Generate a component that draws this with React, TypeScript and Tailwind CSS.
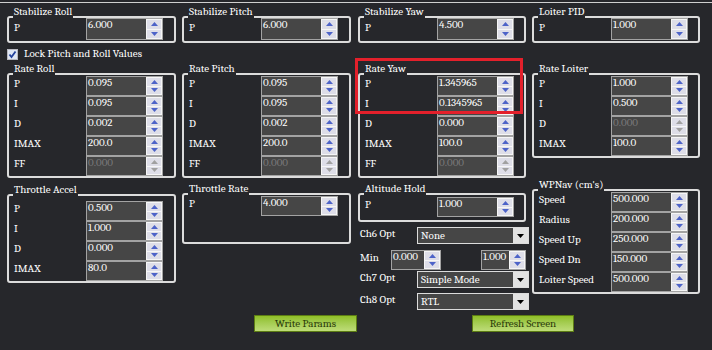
import React from "react";

type Row = { label: string; value: string; disabled?: boolean };

const BG = "bg-[#26272b]";

function Arrow({ up, disabled }: { up?: boolean; disabled?: boolean }) {
  return (
    <svg width="7" height="4" viewBox="0 0 7 4">
      <path d={up ? "M0 4 L3.5 0 L7 4 Z" : "M0 0 L7 0 L3.5 4 Z"} fill={disabled ? "#a0a0a0" : "#4d63c8"} />
    </svg>
  );
}

function Spinner({ disabled }: { disabled?: boolean }) {
  return (
    <div className="absolute right-0 top-0 bottom-0 flex w-[16px] flex-col gap-px border border-[#f6f6f6] bg-[#f6f6f6]">
      <div className="flex flex-1 items-center justify-center bg-[#dedee8]">
        <Arrow up disabled={disabled} />
      </div>
      <div className="flex flex-1 items-center justify-center bg-[#dedee8]">
        <Arrow disabled={disabled} />
      </div>
    </div>
  );
}

function NumBox({ value, disabled, className = "h-[20px] w-[77px]" }: { value: string; disabled?: boolean; className?: string }) {
  return (
    <div className={`relative shrink-0 border border-[#a3a3a3] bg-[#464646] pl-px leading-[12px] ${className}`}>
      <span className={disabled ? "text-[#7a7a7a]" : "text-white"}>{value}</span>
      <Spinner disabled={disabled} />
    </div>
  );
}

function Group({ title, className = "", children }: { title: string; className?: string; children?: React.ReactNode }) {
  return (
    <div className={`relative rounded-[3px] border-2 border-[#dcdcdc] ${className}`}>
      <span className={`absolute -top-[12px] left-[4px] ${BG} px-px leading-[12px] whitespace-nowrap`}>{title}</span>
      {children}
    </div>
  );
}

function ParamRow({ row }: { row: Row }) {
  return (
    <div className="flex h-[20px]">
      <div className="w-[77px] shrink-0 pl-[5px] pt-[2px] leading-[12px]">{row.label}</div>
      <NumBox value={row.value} disabled={row.disabled} />
    </div>
  );
}

function Rows({ rows }: { rows: Row[] }) {
  return (
    <div className="flex flex-col">
      {rows.map((r) => (
        <ParamRow key={r.label} row={r} />
      ))}
    </div>
  );
}

function Stabilize({ title, value }: { title: string; value: string }) {
  return (
    <Group title={title} className="pb-px">
      <div className="flex h-[22px]">
        <div className="w-[77px] shrink-0 pl-[5px] pt-[4px] leading-[12px]">P</div>
        <NumBox value={value} className="h-[22px] w-[77px]" />
      </div>
    </Group>
  );
}

function Combo({ value }: { value: string }) {
  return (
    <div className="relative ml-auto h-[17px] w-[112px] border border-[#dcdcdc] bg-[#464646] pl-[3px] leading-[15px]">
      {value}
      <div className="absolute right-0 top-0 bottom-0 flex w-[15px] items-center justify-center bg-[#e2e2e2]">
        <svg width="7" height="4" viewBox="0 0 7 4">
          <path d="M0 0 L7 0 L3.5 4 Z" fill="#000" />
        </svg>
      </div>
    </div>
  );
}

function ChRow({ label, value, className = "" }: { label: string; value: string; className?: string }) {
  return (
    <div className={`flex items-start pl-[2px] ${className}`}>
      <span className="pt-[1px] leading-[12px]">{label}</span>
      <Combo value={value} />
    </div>
  );
}

function GreenButton({ label, className = "" }: { label: string; className?: string }) {
  return (
    <button className={`h-[17px] border border-[#5d7d14] bg-gradient-to-b from-[#8fbf25] to-[#bedc78] text-center leading-[15px] text-[#2b3a0a] ${className}`}>
      {label}
    </button>
  );
}

export default function App() {
  return (
    <div className={`h-[350px] w-[712px] overflow-hidden ${BG} font-serif [font-family:'Liberation_Serif',serif] text-[11px] font-normal text-white`}>
      <div className="mt-[2px] h-px bg-[#cfcfcf]" />

      <div className="mt-[13px] flex items-start pl-[7px]">
        {/* column 1 */}
        <div className="flex w-[169px] flex-col">
          <Stabilize title="Stabilize Roll" value="6.000" />
          <div className="mt-[5px] flex h-[12px] items-center gap-[6px]">
            <svg width="11" height="11" viewBox="0 0 11 11">
              <rect x="0.5" y="0.5" width="10" height="10" fill="#dfe7f5" stroke="#b8b8c0" />
              <path d="M2.5 5.5 L4.5 8 L8.5 2.5" fill="none" stroke="#23419c" strokeWidth="1.8" />
            </svg>
            <span className="leading-[12px]">Lock Pitch and Roll Values</span>
          </div>
          <Group title="Rate Roll" className="mt-[13px] pt-px">
            <Rows
              rows={[
                { label: "P", value: "0.095" },
                { label: "I", value: "0.095" },
                { label: "D", value: "0.002" },
                { label: "IMAX", value: "200.0" },
                { label: "FF", value: "0.000", disabled: true },
              ]}
            />
          </Group>
          <Group title="Throttle Accel" className="mt-[16px] pt-[5px]">
            <Rows
              rows={[
                { label: "P", value: "0.500" },
                { label: "I", value: "1.000" },
                { label: "D", value: "0.000" },
                { label: "IMAX", value: "80.0" },
              ]}
            />
          </Group>
        </div>

        {/* column 2 */}
        <div className="ml-[6px] flex w-[169px] flex-col">
          <Stabilize title="Stabilize Pitch" value="6.000" />
          <Group title="Rate Pitch" className="mt-[30px] pt-px">
            <Rows
              rows={[
                { label: "P", value: "0.095" },
                { label: "I", value: "0.095" },
                { label: "D", value: "0.002" },
                { label: "IMAX", value: "200.0" },
                { label: "FF", value: "0.000", disabled: true },
              ]}
            />
          </Group>
          <Group title="Throttle Rate" className="mt-[15px] pt-px pb-[26px]">
            <Rows rows={[{ label: "P", value: "4.000" }]} />
          </Group>
        </div>

        {/* column 3 */}
        <div className="ml-[7px] flex w-[168px] flex-col">
          <Stabilize title="Stabilize Yaw" value="4.500" />
          <Group title="Rate Yaw" className="mt-[30px] pt-px">
            <Rows
              rows={[
                { label: "P", value: "1.345965" },
                { label: "I", value: "0.1345965" },
                { label: "D", value: "0.000" },
                { label: "IMAX", value: "100.0" },
                { label: "FF", value: "0.000", disabled: true },
              ]}
            />
            {/* highlight */}
            <div className="pointer-events-none absolute -left-[5px] -top-[17px] h-[56px] w-[168px] border-[3px] border-[#e3202b]" />
          </Group>
          <Group title="Altitude Hold" className="mt-[15px] pt-[2px] pb-[3px]">
            <Rows rows={[{ label: "P", value: "1.000" }]} />
          </Group>
          <ChRow label="Ch6 Opt" value="None" className="mt-[5px] -mr-[3px]" />
          <div className="mt-[6px] flex h-[20px] pl-[2px]">
            <span className="w-[33px] pt-[2px] leading-[12px]">Min</span>
            <NumBox value="0.000" className="h-[20px] w-[50px]" />
            <NumBox value="1.000" className="ml-[40px] h-[20px] w-[45px]" />
          </div>
          <ChRow label="Ch7 Opt" value="Simple Mode" className="mt-px -mr-[3px]" />
          <ChRow label="Ch8 Opt" value="RTL" className="mt-[5px] -mr-[3px]" />
        </div>

        {/* column 4 */}
        <div className="ml-[6px] flex w-[168px] flex-col">
          <Stabilize title="Loiter PID" value="1.000" />
          <Group title="Rate Loiter" className="mt-[30px] pt-px">
            <Rows
              rows={[
                { label: "P", value: "1.000" },
                { label: "I", value: "0.500" },
                { label: "D", value: "0.000", disabled: true },
                { label: "IMAX", value: "100.0" },
              ]}
            />
          </Group>
          <Group title="WPNav (cm's)" className="mt-[31px] pt-px">
            <Rows
              rows={[
                { label: "Speed", value: "500.000" },
                { label: "Radius", value: "200.000" },
                { label: "Speed Up", value: "250.000" },
                { label: "Speed Dn", value: "150.000" },
                { label: "Loiter Speed", value: "500.000" },
              ]}
            />
          </Group>
        </div>
      </div>

      <div className="mt-[5px] flex pl-[254px]">
        <GreenButton label="Write Params" className="w-[103px]" />
        <GreenButton label="Refresh Screen" className="ml-[115px] w-[102px]" />
      </div>
    </div>
  );
}
